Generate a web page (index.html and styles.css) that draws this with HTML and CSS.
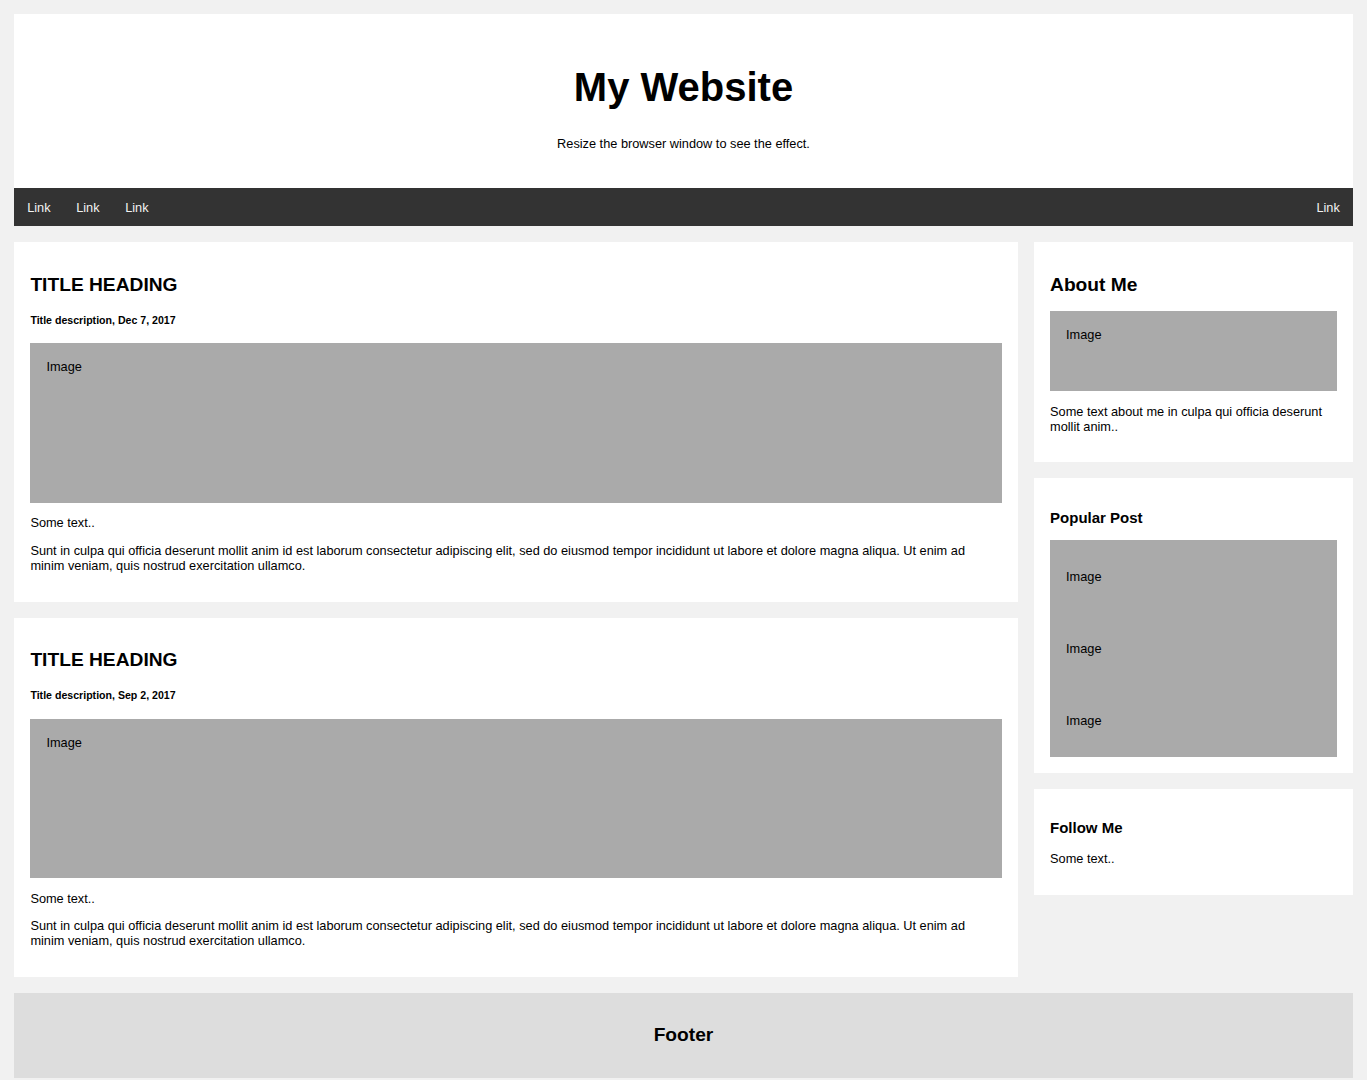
FILE: index.html
```html
<!DOCTYPE html>
<html lang="en">
<head>
  <meta charset="UTF-8" />
  <meta name="viewport" content="width=device-width, initial-scale=1.0"/>
  <title>My Website</title>
  <link rel="stylesheet" href="styles.css">
</head>
<body>
  <div class="header">
    <h1>My Website</h1>
    <p>Resize the browser window to see the effect.</p>
  </div>

  <div class="topnav">
    <a href="#">Link</a>
    <a href="#">Link</a>
    <a href="#">Link</a>
    <a href="#" class="right">Link</a>
  </div>

  <div class="row">
    <div class="leftcolumn">
      <div class="card">
        <h2>TITLE HEADING</h2>
        <h5>Title description, Dec 7, 2017</h5>
        <div class="fakeimg big">Image</div>
        <p>Some text..</p>
        <p>Sunt in culpa qui officia deserunt mollit anim id est laborum consectetur adipiscing elit, sed do eiusmod tempor incididunt ut labore et dolore magna aliqua. Ut enim ad minim veniam, quis nostrud exercitation ullamco.</p>
      </div>
      <div class="card">
        <h2>TITLE HEADING</h2>
        <h5>Title description, Sep 2, 2017</h5>
        <div class="fakeimg big">Image</div>
        <p>Some text..</p>
        <p>Sunt in culpa qui officia deserunt mollit anim id est laborum consectetur adipiscing elit, sed do eiusmod tempor incididunt ut labore et dolore magna aliqua. Ut enim ad minim veniam, quis nostrud exercitation ullamco.</p>
      </div>
    </div>

    <div class="rightcolumn">
      <div class="card">
        <h2>About Me</h2>
        <div class="fakeimg small">Image</div>
        <p>Some text about me in culpa qui officia deserunt mollit anim..</p>
      </div>
      <div class="card">
        <h3>Popular Post</h3>
        <div class="fakeimg"><p>Image</p></div>
        <div class="fakeimg"><p>Image</p></div>
        <div class="fakeimg"><p>Image</p></div>
      </div>
      <div class="card">
        <h3>Follow Me</h3>
        <p>Some text..</p>
      </div>
    </div>
  </div>

  <div class="footer">
    <h2>Footer</h2>
  </div>
</body>
</html>
```

FILE: styles.css
```css
* {
  box-sizing: border-box;
}

body {
  font-family: "Liberation Sans", Arial, sans-serif;
  font-size: 12.75px;
  margin: 6.4px;
  padding: 8px;
  background: #f1f1f1;
}

/* Header */
.header {
  padding: 24px;
  text-align: center;
  background: white;
}

.header h1 {
  font-size: 40px;
  margin: 26.5px 0;
}

.header p {
  margin: 12.8px 0;
}

/* Top navigation */
.topnav {
  display: flex;
  background-color: #333;
}

.topnav a {
  display: block;
  color: #f2f2f2;
  text-align: center;
  padding: 11.6px 12.8px;
  text-decoration: none;
}

.topnav a.right {
  margin-left: auto;
}

/* Columns */
.row {
  display: flex;
  align-items: flex-start;
}

.leftcolumn {
  width: 75%;
}

.rightcolumn {
  width: 25%;
  padding-left: 16px;
}

.fakeimg {
  background-color: #aaa;
  width: 100%;
  padding: 16px;
}

.fakeimg.big {
  height: 159.5px;
}

.fakeimg.small {
  height: 80px;
}

.fakeimg p {
  margin: 12.8px 0;
}

.card {
  background-color: white;
  padding: 16px;
  margin-top: 16px;
}

.card h2 {
  font-size: 19.2px;
  margin: 15.4px 0;
}

.card h3 {
  font-size: 15px;
  margin: 14.5px 0;
}

.card h5 {
  font-size: 10.6px;
  margin: 17.8px 0;
}

.card p {
  margin: 12.6px 0;
}

/* Footer */
.footer {
  padding: 16px;
  text-align: center;
  background: #ddd;
  margin-top: 16px;
}

.footer h2 {
  font-size: 19.2px;
  margin: 15.4px 0;
}
```
